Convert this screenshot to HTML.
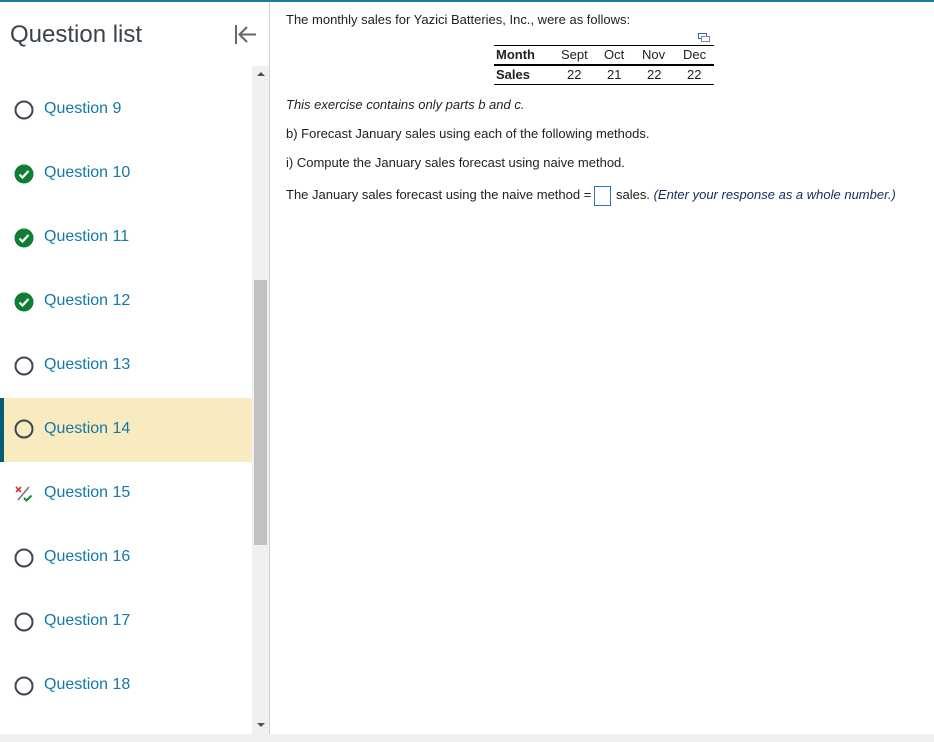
<!DOCTYPE html>
<html><head><meta charset="utf-8"><style>
body{margin:0;width:934px;height:742px;position:relative;overflow:hidden;background:#fff;font-family:"Liberation Sans",Arial,sans-serif}
.a{position:absolute}
.q{position:absolute;left:0;width:252px;height:64px}
.q span{position:absolute;left:44px;top:23px;font-size:16px;color:#1379a6}
.q svg{position:absolute;left:14px;top:22px}
.t{position:absolute;left:286px;font-size:13px;color:#222;white-space:nowrap}
</style></head><body>
<div class="a" style="left:0;top:0;width:934px;height:2px;background:#137ea8"></div>
<div class="a" style="left:10px;top:21px;font-size:24px;color:#3a434c">Question list</div>
<svg class="a" style="left:234px;top:24px" width="24" height="22" viewBox="0 0 24 22"><path d="M2 1v19M22 10.5H6M13 3l-7.5 7.5L13 18" stroke="#666" stroke-width="2" fill="none"/></svg>
<div class="a" style="left:269px;top:2px;width:1px;height:732px;background:#d0d0d8"></div>
<div class="a" style="left:252px;top:66px;width:17px;height:668px;background:#f0f0f0"></div>
<div class="a" style="left:254px;top:280px;width:13px;height:265px;background:#c1c1c1"></div>
<div class="a" style="left:257px;top:72px;width:0;height:0;border-left:4px solid transparent;border-right:4px solid transparent;border-bottom:4px solid #505050"></div>
<div class="a" style="left:257px;top:723px;width:0;height:0;border-left:4px solid transparent;border-right:4px solid transparent;border-top:4px solid #505050"></div>
<div class="a" style="left:0;top:734px;width:934px;height:8px;background:#f0f0f0"></div>

<div class="q" style="top:77px"><svg width="20" height="20" style="top:23px"><circle cx="10" cy="10" r="8.5" stroke="#3d4650" stroke-width="2" fill="none"/></svg><span>Question 9</span></div>
<div class="q" style="top:141px"><svg width="20" height="20" style="top:23px"><circle cx="10" cy="10" r="9.5" fill="#0f7d33"/><path d="M5.5 10.5l3 3 6-6.5" stroke="#fff" stroke-width="2.2" fill="none"/></svg><span>Question 10</span></div>
<div class="q" style="top:205px"><svg width="20" height="20" style="top:23px"><circle cx="10" cy="10" r="9.5" fill="#0f7d33"/><path d="M5.5 10.5l3 3 6-6.5" stroke="#fff" stroke-width="2.2" fill="none"/></svg><span>Question 11</span></div>
<div class="q" style="top:269px"><svg width="20" height="20" style="top:23px"><circle cx="10" cy="10" r="9.5" fill="#0f7d33"/><path d="M5.5 10.5l3 3 6-6.5" stroke="#fff" stroke-width="2.2" fill="none"/></svg><span>Question 12</span></div>
<div class="q" style="top:333px"><svg width="20" height="20" style="top:23px"><circle cx="10" cy="10" r="8.5" stroke="#3d4650" stroke-width="2" fill="none"/></svg><span>Question 13</span></div>
<div class="q" style="top:398px;background:#f8ebbf"><div class="a" style="left:0;top:0;width:4px;height:64px;background:#075e78"></div><svg width="20" height="20" style="top:21px"><circle cx="10" cy="10" r="8.5" stroke="#3d4650" stroke-width="2" fill="none"/></svg><span style="top:22px">Question 14</span></div>
<div class="q" style="top:461px"><svg width="20" height="20" style="top:23px"><path d="M2 3l5 5M7 3l-5 5" stroke="#d0393a" stroke-width="1.6"/><path d="M4 16L15 3" stroke="#777" stroke-width="1.6"/><path d="M10 14l2.5 2.5 5-5" stroke="#0f8a33" stroke-width="2" fill="none"/></svg><span>Question 15</span></div>
<div class="q" style="top:525px"><svg width="20" height="20" style="top:23px"><circle cx="10" cy="10" r="8.5" stroke="#3d4650" stroke-width="2" fill="none"/></svg><span>Question 16</span></div>
<div class="q" style="top:589px"><svg width="20" height="20" style="top:23px"><circle cx="10" cy="10" r="8.5" stroke="#3d4650" stroke-width="2" fill="none"/></svg><span>Question 17</span></div>
<div class="q" style="top:653px"><svg width="20" height="20" style="top:23px"><circle cx="10" cy="10" r="8.5" stroke="#3d4650" stroke-width="2" fill="none"/></svg><span>Question 18</span></div>

<div class="t" style="top:12px">The monthly sales for Yazici Batteries, Inc., were as follows:</div>
<svg class="a" style="left:698px;top:33px" width="12" height="10"><rect x="0.5" y="0.5" width="8" height="5" fill="none" stroke="#3060c0"/><rect x="3.5" y="3.5" width="8" height="5" fill="#fff" stroke="#888"/></svg>
<div class="a" style="left:494px;top:45px;width:220px;height:1px;background:#000"></div>
<div class="a" style="left:494px;top:64px;width:220px;height:2px;background:#000"></div>
<div class="a" style="left:494px;top:84px;width:220px;height:1px;background:#000"></div>
<div class="t" style="left:496px;top:47px;font-weight:bold">Month</div>
<div class="t" style="left:561px;top:47px">Sept</div>
<div class="t" style="left:604px;top:47px">Oct</div>
<div class="t" style="left:642px;top:47px">Nov</div>
<div class="t" style="left:683px;top:47px">Dec</div>
<div class="t" style="left:496px;top:67px;font-weight:bold">Sales</div>
<div class="t" style="left:567px;top:67px">22</div>
<div class="t" style="left:607px;top:67px">21</div>
<div class="t" style="left:647px;top:67px">22</div>
<div class="t" style="left:687px;top:67px">22</div>

<div class="t" style="top:97px;font-style:italic">This exercise contains only parts b and c.</div>
<div class="t" style="top:126px">b) Forecast January sales using each of the following methods.</div>
<div class="t" style="top:155px">i) Compute the January sales forecast using naive method.</div>
<div class="t" style="top:187px">The January sales forecast using the naive method =</div>
<div class="a" style="left:594px;top:186px;width:15px;height:18px;border:1px solid #2f6fd0"></div>
<div class="t" style="left:616px;top:187px">sales. <i style="color:#1a2a5a">(Enter your response as a whole number.)</i></div>
</body></html>
